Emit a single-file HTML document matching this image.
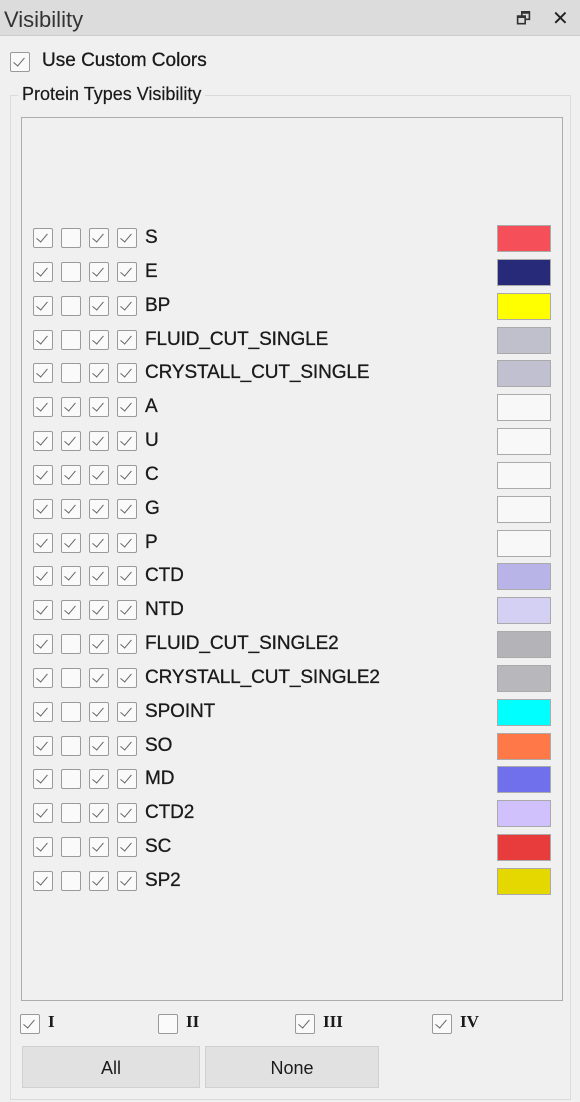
<!DOCTYPE html>
<html><head><meta charset="utf-8"><style>
*{box-sizing:border-box;margin:0;padding:0}
body{width:580px;height:1102px;background:#f0f0f0;font-family:"Liberation Sans",sans-serif;color:#1a1a1a;position:relative;overflow:hidden;font-size:17px}
.abs{position:absolute}
.cb{position:absolute;width:20px;height:20px;border:1.5px solid #9a9a9a;background:#fafafa;border-radius:2px}
.cb.c::after{content:"";position:absolute;left:5px;top:2px;width:5px;height:10px;border:solid #666;border-width:0 1.6px 1.6px 0;transform:rotate(40deg)}
.sw{position:absolute;left:497px;width:54px;height:27px;border:1px solid #aaa}
.lbl{position:absolute;left:145px;font-size:19px;line-height:20px;letter-spacing:-0.1px;-webkit-text-stroke:0.3px #1a1a1a}
.btn{position:absolute;top:1046px;height:42px;background:#e1e1e1;border:1px solid #d0d0d0;text-align:center;line-height:42px;font-size:18px}
</style></head><body>
<div class="abs" style="left:0;top:0;width:580px;height:36px;background:#dcdcdc;border-bottom:1px solid #ccc"></div>
<div class="abs" style="left:4px;top:7px;font-size:22px;color:#333">Visibility</div>
<div class="abs" style="left:516px;top:8px;font-size:16px;color:#333">&#x1F5D7;</div>
<div class="abs" style="left:552px;top:6px;font-size:20px;color:#222">✕</div>
<div class="cb c" style="left:10px;top:52px"></div>
<div class="abs" style="left:42px;top:50px;font-size:19px;-webkit-text-stroke:0.3px #1a1a1a">Use Custom Colors</div>
<div class="abs" style="left:10px;top:95px;width:561px;height:1005px;border:1px solid #dadada"></div>
<div class="abs" style="left:18px;top:84px;font-size:18px;background:#f0f0f0;padding:0 4px;-webkit-text-stroke:0.2px #1a1a1a">Protein Types Visibility</div>
<div class="abs" style="left:21px;top:117px;width:542px;height:884px;border:1px solid #adadad;background:#f0f0f0"></div>
<div id="rows"></div>
<div class="cb c" style="left:20px;top:1014px"></div><div class="abs" style="left:48px;top:1012px;font-family:'Liberation Serif',serif;font-weight:bold">I</div>
<div class="cb" style="left:158px;top:1014px"></div><div class="abs" style="left:186px;top:1012px;font-family:'Liberation Serif',serif;font-weight:bold">II</div>
<div class="cb c" style="left:295px;top:1014px"></div><div class="abs" style="left:323px;top:1012px;font-family:'Liberation Serif',serif;font-weight:bold">III</div>
<div class="cb c" style="left:432px;top:1014px"></div><div class="abs" style="left:460px;top:1012px;font-family:'Liberation Serif',serif;font-weight:bold">IV</div>
<div class="btn" style="left:22px;width:178px">All</div>
<div class="btn" style="left:205px;width:174px">None</div>
<script>
var d=[["S","#f5505a",0],["E","#272a78",0],["BP","#ffff00",0],["FLUID_CUT_SINGLE","#c0c0cc",0],["CRYSTALL_CUT_SINGLE","#c0c0d0",0],["A","#f8f8f8",1],["U","#f8f8f8",1],["C","#f8f8f8",1],["G","#f8f8f8",1],["P","#f8f8f8",1],["CTD","#b8b4e8",1],["NTD","#d4d0f4",1],["FLUID_CUT_SINGLE2","#b4b4b8",0],["CRYSTALL_CUT_SINGLE2","#b8b8bc",0],["SPOINT","#00ffff",0],["SO","#ff7848",0],["MD","#7070ec",0],["CTD2","#d0c0fc",0],["SC","#e83c3c",0],["SP2","#e4d800",0]];
var h="";d.forEach(function(r,i){var y=Math.round(228+i*33.84);
[33,61,89,117].forEach(function(x,j){h+='<div class="cb'+((j==1&&!r[2])?'':' c')+'" style="left:'+x+'px;top:'+y+'px"></div>';});
h+='<div class="lbl" style="top:'+y+'px">'+r[0]+'</div><div class="sw" style="top:'+(y-3)+'px;background:'+r[1]+'"></div>';});
document.getElementById("rows").innerHTML=h;
</script>
</body></html>
